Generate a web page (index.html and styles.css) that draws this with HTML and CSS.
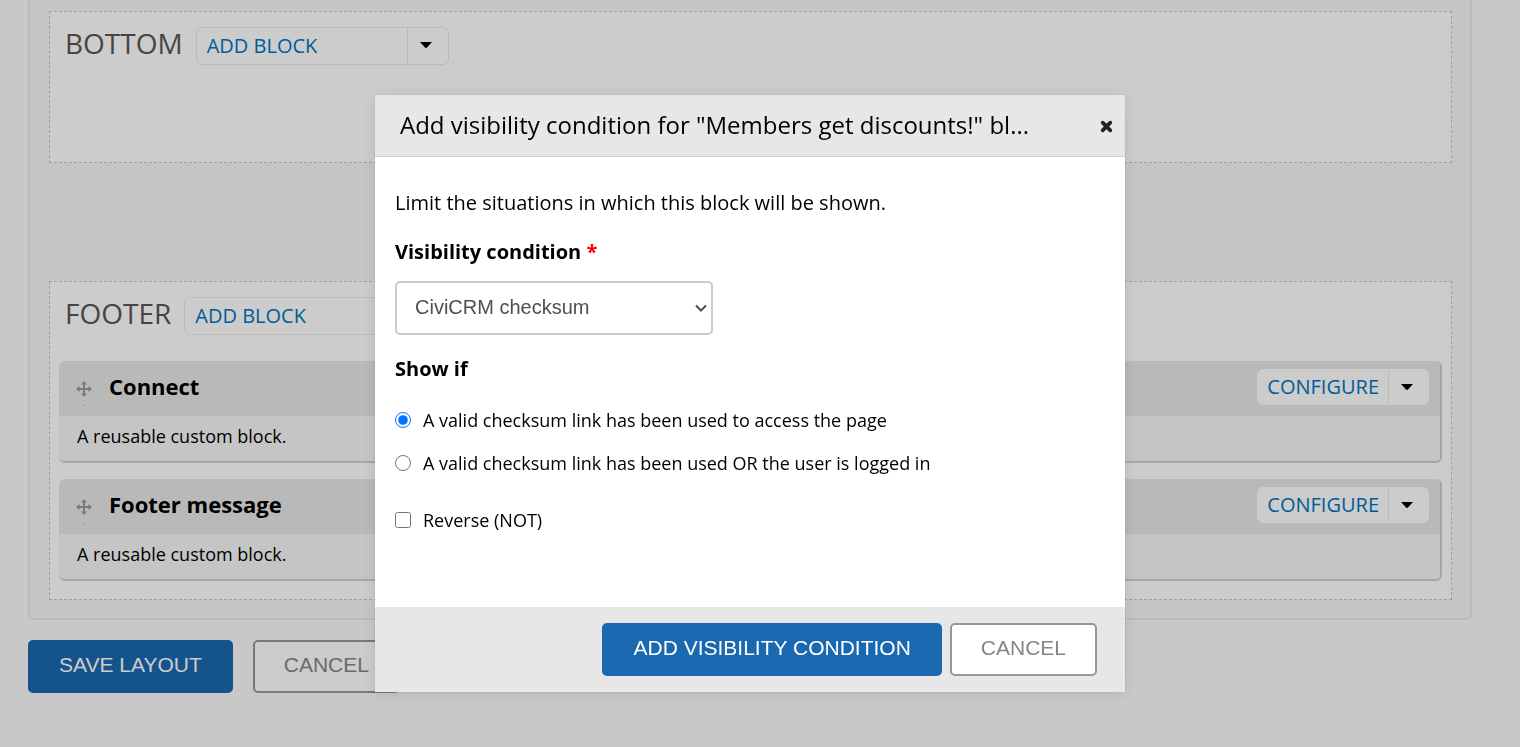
FILE: index.html
```html
<!DOCTYPE html>
<html lang="en">
<head>
<meta charset="utf-8">
<title>Edit layout</title>
<link rel="stylesheet" href="styles.css">
</head>
<body>
<svg class="defs" aria-hidden="true">
  <symbol id="caret" viewBox="0 0 12 6"><path d="M0 0h12L7 5.500Q6 6.300 5 5.500Z"/></symbol>
  <symbol id="move" viewBox="0 0 16 26">
    <path d="M8 2v12M2 8h12" fill="none" stroke="currentColor" stroke-width="2"/>
    <path d="M8 0l3 3.500H5zM8 16l3-3.500H5zM0 8l3.500-3v6zM16 8l-3.500-3v6z" fill="currentColor"/>
    <path d="M7.500 24h1v1h-1z" fill="currentColor"/>
  </symbol>
</svg>
<main class="page">
  <div class="layout">
    <section class="region region-bottom">
      <div class="region-head">
        <h2 class="region-title">BOTTOM</h2>
        <div class="drop drop-wide"><a class="drop-link" href="#">ADD BLOCK</a><button class="drop-toggle" type="button" aria-label="More actions"><svg class="caret"><use href="#caret"/></svg></button></div>
      </div>
    </section>
    <section class="region">
      <div class="region-head">
        <h2 class="region-title">FOOTER</h2>
        <div class="drop drop-wide"><a class="drop-link" href="#">ADD BLOCK</a><button class="drop-toggle" type="button" aria-label="More actions"><svg class="caret"><use href="#caret"/></svg></button></div>
      </div>
      <div class="blocks">
        <article class="block">
          <header class="block-head">
            <svg class="move"><use href="#move"/></svg>
            <h3 class="block-title">Connect</h3>
            <div class="drop drop-plain"><a class="drop-link" href="#">CONFIGURE</a><button class="drop-toggle" type="button" aria-label="More actions"><svg class="caret"><use href="#caret"/></svg></button></div>
          </header>
          <p class="block-text">A reusable custom block.</p>
        </article>
        <article class="block">
          <header class="block-head">
            <svg class="move"><use href="#move"/></svg>
            <h3 class="block-title">Footer message</h3>
            <div class="drop drop-plain"><a class="drop-link" href="#">CONFIGURE</a><button class="drop-toggle" type="button" aria-label="More actions"><svg class="caret"><use href="#caret"/></svg></button></div>
          </header>
          <p class="block-text">A reusable custom block.</p>
        </article>
      </div>
    </section>
  </div>
  <div class="page-actions">
    <button class="btn btn-primary" type="button">SAVE LAYOUT</button>
    <button class="btn btn-secondary" type="button">CANCEL</button>
  </div>
</main>
<div class="overlay">
  <form class="dialog" role="dialog" aria-labelledby="dialog-title">
    <header class="dialog-head">
      <h1 class="dialog-title" id="dialog-title">Add visibility condition for "Members get discounts!" bl...</h1>
      <button class="close" type="button" aria-label="Close"><svg class="close-icon" viewBox="0 0 12 12"><path d="M2.500 2.500l7 7M9.500 2.500l-7 7"/></svg></button>
    </header>
    <div class="dialog-body">
      <p class="intro">Limit the situations in which this block will be shown.</p>
      <label class="label" for="condition">Visibility condition <span class="required">*</span></label>
      <div class="select-wrap">
        <select class="select" id="condition"><option>CiviCRM checksum</option></select>
        <svg class="chevron" viewBox="0 0 12 8"><path d="M1 1.500l5 5 5-5"/></svg>
      </div>
      <fieldset class="options">
        <legend class="label">Show if</legend>
        <div class="option"><input class="tick" type="radio" name="show" id="valid" checked><label for="valid">A valid checksum link has been used to access the page</label></div>
        <div class="option"><input class="tick" type="radio" name="show" id="either"><label for="either">A valid checksum link has been used OR the user is logged in</label></div>
      </fieldset>
      <div class="option"><input class="tick" type="checkbox" id="reverse"><label for="reverse">Reverse (NOT)</label></div>
    </div>
    <footer class="dialog-foot">
      <button class="btn btn-primary" type="button">ADD VISIBILITY CONDITION</button>
      <button class="btn btn-secondary" type="button">CANCEL</button>
    </footer>
  </form>
</div>
</body>
</html>
```
FILE: styles.css
```css
* { box-sizing: border-box; }
body {
  margin: 0;
  background: #fafafa;
  color: #000;
  font: 18px/28px "Open Sans", "Noto Sans", sans-serif;
}
h1, h2, h3, p, fieldset { margin: 0; }
.defs { position: absolute; width: 0; height: 0; }
.page { padding: 0 48px 0 28px; }
.layout {
  display: flex;
  flex-direction: column;
  gap: 118px;
  padding: 11px 18px 18px 19px;
  border: 2px solid #eaeaea;
  border-top: 0;
  border-radius: 0 0 5px 5px;
  background: #f7f7f7;
}
.region {
  padding: 15px 9px 18px;
  border: 1px dashed #c8c8c8;
  background: #fff;
}
.region-bottom { min-height: 152px; }
.region-head { display: flex; gap: 13px; padding-left: 6px; }
.region-title { color: #5a5555; font-weight: 400; font-size: 28px; line-height: 32px; }
.drop {
  display: flex;
  border: 1px solid #eaeaea;
  border-radius: 6px;
  background: #fff;
}
.drop-wide { width: 253px; height: 38px; }
.drop-plain { height: 36px; margin-left: auto; border-color: #fff; }
.drop-link {
  flex: 1;
  padding: 0 10px;
  color: #0074bd;
  font-size: 20px;
  line-height: 36px;
  text-decoration: none;
}
.drop-plain .drop-link { padding: 0 9px; line-height: 34px; }
.drop-toggle {
  display: flex;
  align-items: center;
  width: 41px;
  padding: 0 0 2px 12px;
  border: 0;
  border-left: 1px solid #eaeaea;
  background: none;
}
.drop-plain .drop-toggle { width: 40px; padding-bottom: 0; }
.caret { width: 12px; height: 6px; }
.blocks { display: grid; gap: 16px; padding-top: 26px; }
.block {
  overflow: hidden;
  border-right: 2px solid #d0d0d0;
  border-bottom: 2px solid #d0d0d0;
  border-radius: 6px;
  background: #f7f7f7;
}
.block-head {
  display: flex;
  align-items: center;
  height: 55px;
  padding: 0 11px 3px 17px;
  background: #e8e8e8;
}
.move { width: 16px; height: 26px; margin: 13px 17px 0 0; color: #9a9a9a; }
.block-title { padding-bottom: 2px; font-size: 22px; line-height: 30px; }
.block-text { padding: 6px 18px 11px; }
.page-actions { display: flex; gap: 20px; padding-top: 20px; }
.btn {
  height: 53px;
  padding: 0 29px 4px;
  border: 2px solid #1a68b0;
  border-radius: 5px;
  font: 21px/24px "Liberation Sans", Arial, sans-serif;
}
.btn-primary { background: #1a68b0; color: #fff; }
.btn-secondary { border-color: #96969e; background: #fff; color: #85858a; }
.overlay {
  position: fixed;
  inset: 0;
  display: flex;
  align-items: flex-start;
  justify-content: center;
  padding: 95px 20px 0 0;
  background: rgba(0, 0, 0, .2);
}
.dialog {
  width: 750px;
  background: #fff;
  box-shadow: 0 0 0 1px rgba(0, 0, 0, .04), 0 2px 16px rgba(0, 0, 0, .1);
}
.dialog-head {
  display: flex;
  align-items: center;
  justify-content: space-between;
  height: 62px;
  padding: 0 12px 0 25px;
  border-bottom: 1px solid #d0d0d0;
  background: #e7e7e7;
}
.dialog-title { padding-bottom: 2px; font-weight: 400; font-size: 24px; line-height: 36px; }
.close { display: flex; padding: 2px 0 0; border: 0; background: none; }
.close-icon { width: 13px; height: 13px; fill: none; stroke: #222; stroke-width: 3.500; stroke-linecap: round; }
.dialog-body { padding: 32px 20px 66px; }
.intro { font-size: 20px; padding-bottom: 21px; }
.label { display: block; padding: 0; font-weight: 700; font-size: 20px; line-height: 28px; }
.required { color: #f00; }
.select-wrap { position: relative; width: 318px; margin: 15px 0 20px; }
.select {
  display: block;
  width: 100%;
  height: 54px;
  padding: 0 18px 2px;
  border: 2px solid #ccc;
  border-radius: 5px;
  background: #fff;
  color: #495057;
  font: 20px/24px "Liberation Sans", Arial, sans-serif;
  appearance: none;
}
.chevron {
  position: absolute;
  right: 6px;
  top: 23px;
  width: 12px;
  height: 8px;
  fill: none;
  stroke: #495057;
  stroke-width: 2;
  pointer-events: none;
}
.options { padding: 0 0 14px; border: 0; }
.options .label { padding-bottom: 15px; }
.option { display: flex; align-items: center; gap: 12px; height: 43px; }
.tick { width: 16px; height: 16px; margin: 0; accent-color: #0075ff; }
.dialog-foot {
  display: flex;
  justify-content: flex-end;
  gap: 8px;
  padding: 16px 28px;
  background: #e7e7e7;
}
```
